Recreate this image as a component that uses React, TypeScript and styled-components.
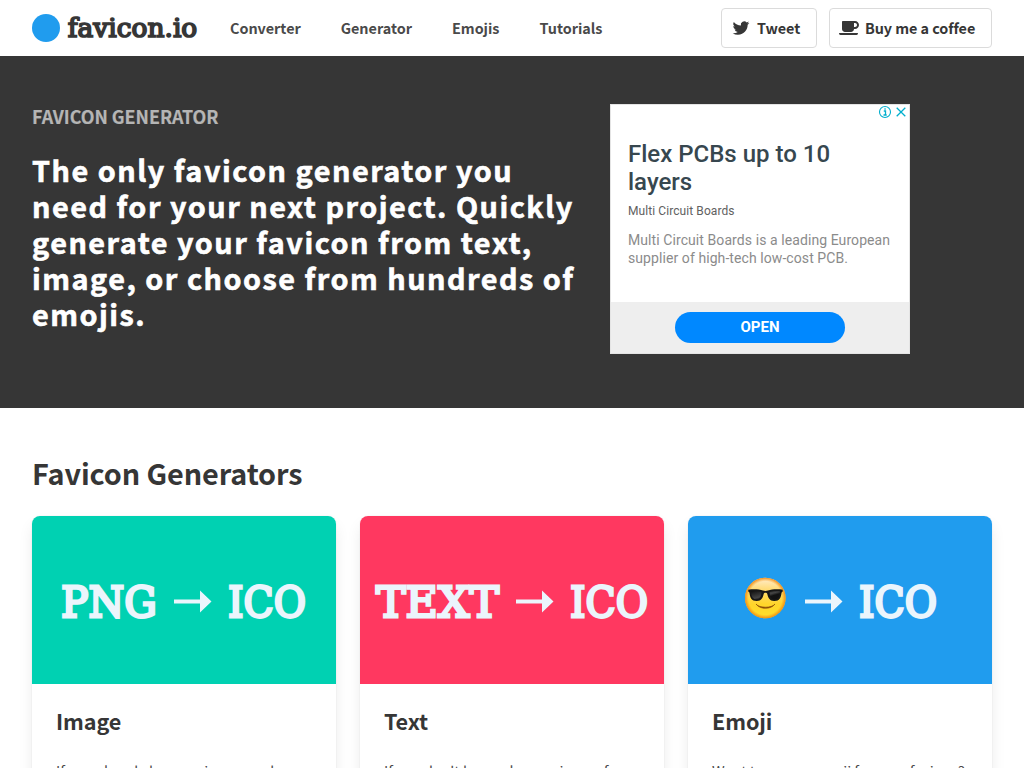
import React from "react";
import styled, { createGlobalStyle } from "styled-components";

const GlobalStyle = createGlobalStyle`
  * { box-sizing: border-box; }
  body {
    margin: 0;
    background: #fff;
    color: #363636;
    font-family: "Source Sans Pro", "Noto Sans CJK SC", sans-serif;
    overflow: hidden;
  }
  h1, h2, h3, p { margin: 0; }
`;

const Page = styled.div`
  height: 768px;
  overflow: hidden;
`;

const Header = styled.header`
  height: 56px;
  padding: 0 32px;
  display: flex;
  align-items: center;
`;

const Logo = styled.svg`
  display: block;
  width: 166px;
  height: 56px;
  overflow: visible;
`;

const SlabText = styled.text`
  font-family: "Roboto Slab", "DejaVu Serif", serif;
  font-weight: 400;
`;

const Nav = styled.nav`
  display: flex;
  gap: 40px;
  margin-left: 32px;
  flex: 1;
`;

const NavLink = styled.a`
  font-size: 14.4px;
  line-height: 24px;
  font-weight: 700;
  letter-spacing: -0.02px;
  color: #4a4a4a;
  white-space: nowrap;
`;

const Actions = styled.div`
  display: flex;
  gap: 12px;
`;

const ActionButton = styled.a<{ $width: number }>`
  width: ${(p) => p.$width}px;
  height: 40px;
  border: 1px solid #dbdbdb;
  border-radius: 4px;
  display: flex;
  align-items: center;
  padding-left: 9px;
  font-size: 14.4px;
  line-height: 24px;
  font-weight: 700;
  letter-spacing: -0.06px;
  white-space: nowrap;
  svg { flex: none; margin-right: 6px; }
`;

const Hero = styled.section`
  height: 352px;
  padding: 48px 32px 0;
  background: #363636;
  display: flex;
`;

const HeroCopy = styled.div`
  width: 578px;
`;

const Eyebrow = styled.p`
  color: #b5b5b5;
  font-size: 17.9px;
  line-height: 25px;
  font-weight: 700;
  letter-spacing: -0.03px;
  -webkit-text-stroke: 0.2px #b5b5b5;
  text-transform: uppercase;
`;

const Headline = styled.h1`
  margin-top: 23px;
  color: #fff;
  font-size: 28.8px;
  line-height: 36px;
  font-weight: 700;
  letter-spacing: 1.5px;
  -webkit-text-stroke: 0.6px #fff;
  white-space: nowrap;
`;

const Ad = styled.aside`
  position: relative;
  width: 300px;
  height: 250px;
  border: 1px solid #e4e4e4;
  background: #fff;
  font-family: Roboto, sans-serif;
  display: flex;
  flex-direction: column;
`;

const AdControls = styled.svg`
  position: absolute;
  top: 0;
  right: 1px;
`;

const AdBody = styled.div`
  flex: 1;
  padding: 35px 17px 0;
`;

const AdTitle = styled.h2`
  font-size: 24px;
  line-height: 28px;
  font-weight: 500;
  color: #37474f;
`;

const AdBrand = styled.p`
  margin-top: 8px;
  font-size: 12px;
  line-height: 14px;
  letter-spacing: 0.08px;
  color: #616161;
`;

const AdText = styled.p`
  margin-top: 13px;
  font-size: 14px;
  line-height: 18px;
  letter-spacing: 0.08px;
  color: #8b8b8b;
  white-space: nowrap;
`;

const AdFooter = styled.div`
  height: 51px;
  background: #eee;
  display: flex;
  justify-content: center;
  padding-top: 10px;
`;

const AdButton = styled.a`
  width: 170px;
  height: 31px;
  border-radius: 16px;
  background: #08f;
  color: #fff;
  font-size: 15px;
  line-height: 31px;
  font-weight: 700;
  text-align: center;
`;

const Generators = styled.section`
  padding: 47px 32px 0;
`;

const SectionTitle = styled.h2`
  font-size: 28.8px;
  line-height: 36px;
  font-weight: 700;
  letter-spacing: -0.1px;
`;

const Cards = styled.div`
  margin-top: 25px;
  display: grid;
  grid-template-columns: repeat(3, 304px);
  gap: 24px;
`;

const CardBox = styled.article`
  height: 400px;
  border-radius: 8px;
  overflow: hidden;
  background: #fff;
  box-shadow: 0 8px 16px -2px rgba(10, 10, 10, 0.1), 0 0 0 1px rgba(10, 10, 10, 0.02);
`;

const Banner = styled.svg<{ $color: string }>`
  display: block;
  width: 304px;
  height: 168px;
  background: ${(p) => p.$color};
`;

const CardBody = styled.div`
  padding: 23px 24px 24px;
`;

const CardTitle = styled.h3`
  font-size: 21.6px;
  line-height: 27px;
  font-weight: 700;
  letter-spacing: -0.1px;
`;

const CardText = styled.p`
  margin-top: 25px;
  font-size: 14.4px;
  line-height: 24px;
  letter-spacing: -0.03px;
  color: #4a4a4a;
  white-space: nowrap;
`;

const TwitterIcon = () => (
  <svg width="20" height="20" viewBox="0 0 24 24" fill="#363636">
    <path d="M22 5.9c-.74.33-1.53.55-2.36.65.85-.51 1.5-1.32 1.8-2.28-.79.47-1.67.81-2.6 1A4.1 4.1 0 0 0 11.86 9c-3.4-.17-6.43-1.8-8.45-4.29a4.1 4.1 0 0 0 1.27 5.48 4.1 4.1 0 0 1-1.86-.52v.06a4.1 4.1 0 0 0 3.29 4.02 4.1 4.1 0 0 1-1.85.07 4.1 4.1 0 0 0 3.83 2.85A8.23 8.23 0 0 1 2 18.37a11.6 11.6 0 0 0 6.29 1.84c7.55 0 11.68-6.25 11.68-11.67l-.01-.53A8.3 8.3 0 0 0 22 5.9z" />
  </svg>
);

const CoffeeIcon = () => (
  <svg width="20" height="16" viewBox="0 0 640 512" fill="#363636">
    <path d="M192 384h192c53 0 96-43 96-96h32c70.600 0 128-57.400 128-128S582.600 32 512 32H120c-13.300 0-24 10.700-24 24v232c0 53 43 96 96 96zM512 96c35.300 0 64 28.700 64 64s-28.700 64-64 64h-32V96h32zm47.700 384H48.300c-47.600 0-61-64-36-64h583.300c25 0 11.800 64-35.900 64z" />
  </svg>
);

const Slab = ({ x, width, children }: { x: number; width: number; children: string }) => (
  <SlabText
    x={x + 1}
    y="101"
    fontSize="43.500"
    fill="#ebf5fc"
    stroke="#ebf5fc"
    strokeWidth="2.800"
    textLength={width - 2}
    lengthAdjust="spacingAndGlyphs"
  >
    {children}
  </SlabText>
);

const Arrow = ({ x }: { x: number }) => (
  <path transform={`translate(${x} 0)`} d="M0 83.500h26V74.500L37.500 85.500 26 96.500V87.500H0z" fill="#ebf5fc" />
);

const CoolFace = () => (
  <g transform="translate(57 61.500)">
    <defs>
      <linearGradient id="skin" x1="0" y1="0" x2="0" y2="1">
        <stop offset="0" stopColor="#ffecd0" />
        <stop offset=".28" stopColor="#ffdc78" />
        <stop offset=".65" stopColor="#ffd52a" />
        <stop offset="1" stopColor="#ffe02a" />
      </linearGradient>
      <radialGradient id="rim">
        <stop offset=".82" stopColor="#f79a16" stopOpacity="0" />
        <stop offset="1" stopColor="#f28b13" />
      </radialGradient>
      <linearGradient id="lens" x1="0" y1="0" x2="1" y2="1">
        <stop offset="0" stopColor="#111" />
        <stop offset=".5" stopColor="#444" />
        <stop offset=".65" stopColor="#111" />
      </linearGradient>
    </defs>
    <circle cx="20.300" cy="20.500" r="20.300" fill="url(#skin)" />
    <circle cx="20.300" cy="20.500" r="20.300" fill="url(#rim)" />
    <path d="M11 26.500c4 5.800 15 5.800 19 0-3 4.200-16 4.200-19 0z" fill="#8b4c08" stroke="#8b4c08" strokeWidth=".6" strokeLinejoin="round" />
    <path d="M3.200 12.300c5-.8 11-.5 14.800.7 1.700.5 3.300.5 5 0 3.800-1.200 9.800-1.500 14.800-.7l-.2 2-1 .6c-.6 5.100-2 8.500-7.300 8.500-4.700 0-6.300-3.500-7-7-.6-1.400-3-1.400-3.600 0-.7 3.500-2.300 7-7 7-5.300 0-6.700-3.400-7.300-8.500l-1-.6z" fill="#171717" />
    <path d="M6 14c4-.6 8-.3 10.500.7-.4 4.800-2 7.200-5 7.200-4 0-5.200-3.400-5.500-7.900zM24.500 14.700c2.500-1 6.500-1.300 10.500-.7-.3 4.500-1.500 7.900-5.500 7.900-3 0-4.600-2.400-5-7.200z" fill="url(#lens)" />
  </g>
);

const links = ["Converter", "Generator", "Emojis", "Tutorials"];

export default function App() {
  return (
    <Page>
      <GlobalStyle />
      <Header>
        <Logo viewBox="0 0 166 56">
          <circle cx="14" cy="28" r="14" fill="#209cee" />
          <SlabText
            x="35.800"
            y="37.200"
            fontSize="26"
            fill="#363636"
            stroke="#363636"
            strokeWidth="1.700"
            textLength="129.500"
            lengthAdjust="spacingAndGlyphs"
          >
            favicon.io
          </SlabText>
        </Logo>
        <Nav>
          {links.map((l) => (
            <NavLink key={l}>{l}</NavLink>
          ))}
        </Nav>
        <Actions>
          <ActionButton $width={96}>
            <TwitterIcon />
            Tweet
          </ActionButton>
          <ActionButton $width={163}>
            <CoffeeIcon />
            Buy me a coffee
          </ActionButton>
        </Actions>
      </Header>
      <Hero>
        <HeroCopy>
          <Eyebrow>Favicon Generator</Eyebrow>
          <Headline>
            The only favicon generator you
            <br />
            need for your next project. Quickly
            <br />
            generate your favicon from text,
            <br />
            image, or choose from hundreds of
            <br />
            emojis.
          </Headline>
        </HeroCopy>
        <Ad>
          <AdControls width="30" height="14" viewBox="0 0 30 14" fill="none" stroke="#00aecd">
            <circle cx="7" cy="7" r="5.500" strokeWidth="1.100" />
            <path d="M5.800 6h1.700v4M5.500 10h3.200M6.400 4h1.300" strokeWidth="1.300" />
            <path d="M18.700 2.700l8.600 8.600M27.300 2.700l-8.600 8.600" strokeWidth="1.300" />
          </AdControls>
          <AdBody>
            <AdTitle>
              Flex PCBs up to 10
              <br />
              layers
            </AdTitle>
            <AdBrand>Multi Circuit Boards</AdBrand>
            <AdText>
              Multi Circuit Boards is a leading European
              <br />
              supplier of high-tech low-cost PCB.
            </AdText>
          </AdBody>
          <AdFooter>
            <AdButton>OPEN</AdButton>
          </AdFooter>
        </Ad>
      </Hero>
      <Generators>
        <SectionTitle>Favicon Generators</SectionTitle>
        <Cards>
          <CardBox>
            <Banner $color="#00d1b2" viewBox="0 0 304 168">
              <Slab x={28} width={98}>PNG</Slab>
              <Arrow x={142} />
              <Slab x={195} width={80}>ICO</Slab>
            </Banner>
            <CardBody>
              <CardTitle>Image</CardTitle>
              <CardText>If you already have an image and</CardText>
            </CardBody>
          </CardBox>
          <CardBox>
            <Banner $color="#ff3860" viewBox="0 0 304 168">
              <Slab x={15} width={125}>TEXT</Slab>
              <Arrow x={156} />
              <Slab x={209} width={80}>ICO</Slab>
            </Banner>
            <CardBody>
              <CardTitle>Text</CardTitle>
              <CardText>If you don't have a logo or image for</CardText>
            </CardBody>
          </CardBox>
          <CardBox>
            <Banner $color="#209cee" viewBox="0 0 304 168">
              <CoolFace />
              <Arrow x={117} />
              <Slab x={170} width={80}>ICO</Slab>
            </Banner>
            <CardBody>
              <CardTitle>Emoji</CardTitle>
              <CardText>Want to use an emoji for your favicon?</CardText>
            </CardBody>
          </CardBox>
        </Cards>
      </Generators>
    </Page>
  );
}
